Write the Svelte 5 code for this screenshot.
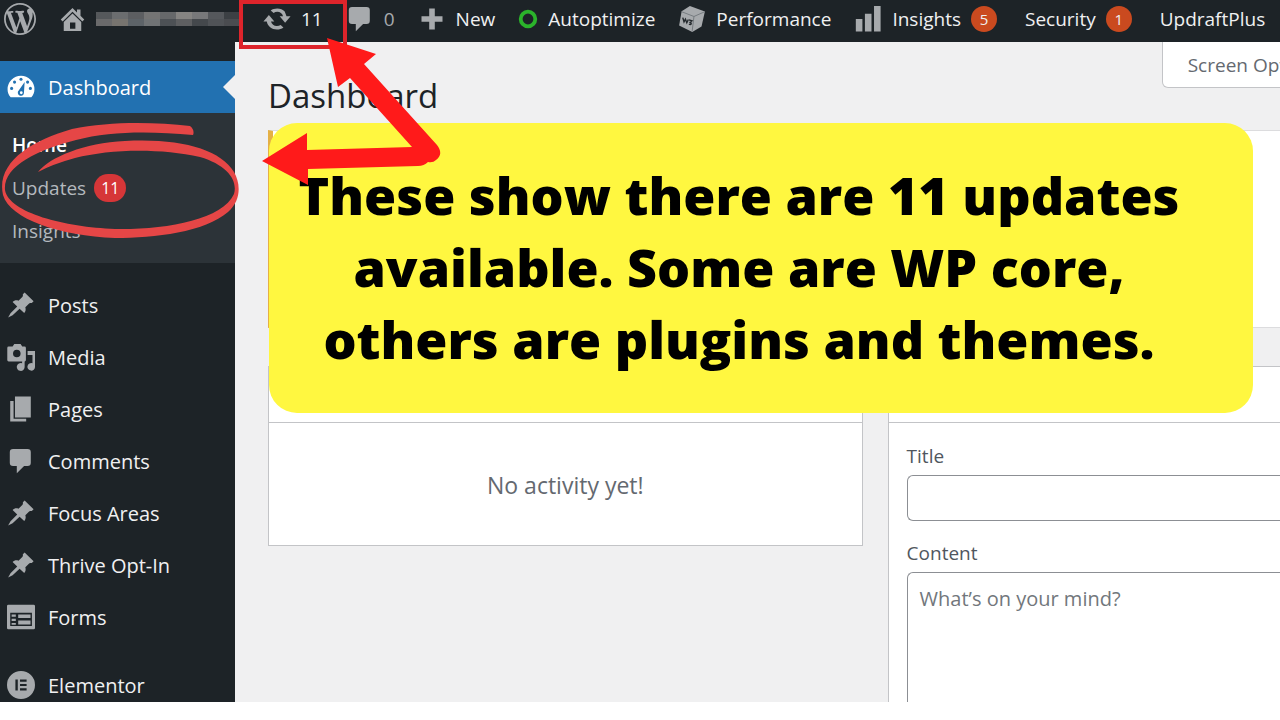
<script>
  const barItems = [
    { icon: 'update', label: '11' },
    { icon: 'comment', label: '0', muted: true },
    { icon: 'plus', label: 'New' },
    { icon: 'ring', label: 'Autoptimize' },
    { icon: 'cube', label: 'Performance' },
    { icon: 'bars', label: 'Insights', badge: 5 },
    { label: 'Security', badge: 1 },
    { label: 'UpdraftPlus' },
  ];

  const subItems = [
    { label: 'Home', current: true },
    { label: 'Updates', count: 11 },
    { label: 'Insights' },
  ];

  const menuItems = [
    { icon: 'pin', label: 'Posts' },
    { icon: 'media', label: 'Media' },
    { icon: 'pages', label: 'Pages' },
    { icon: 'comment', label: 'Comments' },
    { icon: 'pin', label: 'Focus Areas' },
    { icon: 'pin', label: 'Thrive Opt-In' },
    { icon: 'forms', label: 'Forms' },
    { icon: 'elementor', label: 'Elementor', separated: true },
  ];

  // colours of the pixelated site name, one per block
  const mosaic = [
    '#55585b', '#6b6d6f', '#5c5e61', '#747474', '#66686a', '#858482', '#77787a', '#55585c', '#3c4044',
    '#6a6a6b', '#77746f', '#5d6368', '#707375', '#4d5155', '#5e5f61', '#44484c', '#505357', '#4a4c50',
  ];

  let title = $state('');
  let content = $state('');
</script>

{#snippet icon(name)}
  <svg class="icon {name}" viewBox="0 0 20 20" aria-hidden="true">
    {#if name === 'update'}
      <path d="M10.2 2.500c2.100 0 4 .8 5.300 2.200l1.300 3.300h2.900l-3.900 4.700-3.900-4.700h2.400c-.5-1.900-2.100-3.100-4.100-3.100-1 0-1.900.3-2.600.8L5.500 3.900c1.300-.9 2.900-1.400 4.700-1.400zM4.200 7.100l3.900 4.700H5.700c.5 1.900 2.100 3.200 4.200 3.200 1 0 1.900-.3 2.700-.8l2 1.800c-1.300 1-2.900 1.500-4.700 1.500-3.700 0-6.600-2.400-7.200-5.700H.3z" />
    {:else if name === 'comment'}
      <path d="M4.300 1.500h10.400q2.300 0 2.300 2.300v7.400q0 2.300-2.300 2.300h-2.500L7 18.700v-5.200H4.300Q2 13.500 2 11.200V3.800q0-2.300 2.300-2.300z" />
    {:else if name === 'plus'}
      <path d="M8 2.500h4V8h5.500v4H12v5.500H8V12H2.500V8H8z" />
    {:else if name === 'ring'}
      <circle cx="10" cy="10" r="7.300" fill="none" stroke="#2bb32b" stroke-width="3.800" />
    {:else if name === 'cube'}
      <path d="m8.500.7 10.700 4-2.400 10.700-6.600 3.900L.8 14.600 2.600 4.500z" />
      <path d="m2.600 4.800 8.800 3.400 7.500-3.300M11.400 8.200l-1.300 10.700" fill="none" stroke="#6c7277" stroke-width=".6" />
      <path d="m3.400 9 .9 3 1-1.900 1 2.600 1.100-2.300M7.900 10.600l2 .7-1.200 1.100c1.200.5.9 2-.9 1.300" fill="none" stroke="#24292d" stroke-width="1" />
    {:else if name === 'bars'}
      <path d="M1.300 10H6v9H1.300zM7.800 6.300h4.700V19H7.800zM14.300.8H19V19h-4.700z" />
    {:else if name === 'pin'}
      <path d="m12.600 1 6.400 6.300-1.300 1.300c-.7-.1-1.300 0-1.900.3l-2.700 2.700c.5 1.600.2 3-.8 4.200L9 12.600l-5 4.700L.800 19l1.700-3.100L7.300 11 4 7.800c1.200-1.100 2.700-1.400 4.200-.8l2.900-2.900c.3-.6.4-1.200.2-1.800z" />
    {:else if name === 'media'}
      <path fill-rule="evenodd" d="M2 2.500h2L5.200.8h4.500l1.200 1.700h1.600q1 0 1 1v8.700q0 1-1 1H1.200q-1 0-1-1V3.500q0-1 1-1zM7 4.800a2.700 2.700 0 1 0 0 5.400 2.700 2.700 0 0 0 0-5.400z" />
      <path d="M14.700 5.700H20V17a2.700 2.700 0 1 1-1.800-2.500V8.500h-3.500zM12.600 10.500v6.600a2.800 2.800 0 1 1-1.800-2.600v-1.300z" />
    {:else if name === 'pages'}
      <path d="M5.700 1H17v15H5.700zM2.300 4.300h2.400V17h9v2H2.300z" />
    {:else if name === 'forms'}
      <path fill-rule="evenodd" d="M1 1.200h18q1 0 1 1v15.600q0 1-1 1H1q-1 0-1-1V2.200q0-1 1-1zM2.300 7v9.500h15.500V7zM3.300 8.300h3v1.500h-3zm0 3h3v1.500h-3zm0 3h3v1.300h-3zM8 8.300h8.800v2.500H8zm0 4.200h8.800v2.800H8z" />
    {:else if name === 'elementor'}
      <path fill-rule="evenodd" d="M10 0a10 10 0 1 0 0 20 10 10 0 0 0 0-20zM6 6h1.700v8H6zm3.300 0H14v1.600H9.300zm0 3.200H14v1.600H9.300zm0 3.200H14V14H9.300z" />
    {:else if name === 'gauge'}
      <path fill="#fff" d="M2.600 17.300C1.100 15.700.4 13.800.4 11.600a9.600 9.600 0 0 1 19.200 0c0 2.200-.7 4.100-2.200 5.700z" />
      <g fill="#2271b1">
        <circle cx="10" cy="4.500" r="1.100" />
        <circle cx="5.400" cy="6.500" r="1.100" />
        <circle cx="14.700" cy="6.500" r="1.100" />
        <circle cx="3.300" cy="11" r="1.100" />
        <circle cx="16.700" cy="11" r="1.100" />
        <path d="m12.600 6.500-.5 7.700a2.200 2.200 0 1 1-3.600-1.800z" />
      </g>
      <circle cx="10.200" cy="14.100" r="1" fill="#fff" />
    {:else if name === 'home'}
      <path d="m10 .8 3.600 3.500V2h2.800v5l3 3-1.500 1.500L10 3.700l-7.900 7.800L.6 10z" />
      <path fill-rule="evenodd" d="m10 5.100 7 6.900v7.200H3V12zM8 12.300v5h4.300v-5z" />
    {:else if name === 'wordpress'}
      <path fill-rule="evenodd" d="M20 10c0-5.510-4.490-10-10-10C4.480 0 0 4.490 0 10c0 5.520 4.480 10 10 10 5.510 0 10-4.480 10-10zM7.780 15.370L4.370 6.220c.55-.02 1.170-.08 1.170-.08.5-.06.440-1.130-.06-1.110 0 0-1.450.11-2.370.11-.18 0-.37 0-.58-.01C4.120 2.690 6.870 1.110 10 1.110c2.330 0 4.450.87 6.050 2.340-.68-.11-1.650.39-1.650 1.580 0 .74.450 1.360.9 2.100.35.61.55 1.360.55 2.460 0 1.490-1.400 5-1.400 5l-3.030-8.370c.54-.02.82-.17.82-.17.5-.05.440-1.250-.06-1.220 0 0-1.440.12-2.380.12-.87 0-2.330-.12-2.330-.12-.5-.03-.56 1.200-.06 1.220l.92.08 1.260 3.410zM17.410 10c.24-.64.740-1.870.43-4.250.7 1.290 1.050 2.710 1.050 4.250 0 3.290-1.730 6.240-4.400 7.780.97-2.590 1.940-5.200 2.920-7.780zM6.100 18.090C3.120 16.650 1.110 13.530 1.110 10c0-1.300.23-2.480.72-3.590C3.250 10.300 4.670 14.200 6.100 18.090zm4.030-6.630l2.580 6.980c-.86.29-1.760.45-2.710.45-.79 0-1.570-.11-2.290-.33.810-2.380 1.620-4.740 2.420-7.100z" />
    {/if}
  </svg>
{/snippet}

<div class="screen">
  <header class="admin-bar">
    <a class="logo" href="#about" aria-label="About WordPress">{@render icon('wordpress')}</a>
    <a class="site" href="#site" aria-label="Visit site">
      {@render icon('home')}
      <span class="mosaic">
        {#each mosaic as color}
          <span style="background: {color}"></span>
        {/each}
      </span>
    </a>
    {#each barItems as item}
      <a class="bar-item" class:muted={item.muted} class:plain={!item.icon} href="#bar">
        {#if item.icon}{@render icon(item.icon)}{/if}
        <span>{item.label}</span>
        {#if item.badge}<span class="bar-badge">{item.badge}</span>{/if}
      </a>
    {/each}
  </header>

  <div class="body">
    <nav class="sidebar">
      <a class="menu-item active" href="#dashboard">
        {@render icon('gauge')}
        <span>Dashboard</span>
      </a>
      <div class="submenu">
        {#each subItems as item}
          <a class:current={item.current} href="#sub">
            {item.label}
            {#if item.count}<span class="count">{item.count}</span>{/if}
          </a>
        {/each}
      </div>
      {#each menuItems as item}
        <a class="menu-item" class:separated={item.separated} href="#menu">
          {@render icon(item.icon)}
          <span>{item.label}</span>
        </a>
      {/each}
    </nav>

    <main>
      <button class="screen-options">Screen Options</button>
      <h1>Dashboard</h1>
      <section class="notice"></section>
      <div class="widgets">
        <section class="card">
          <div class="card-head"></div>
          <p class="empty">No activity yet!</p>
        </section>
        <section class="card draft">
          <div class="card-head"></div>
          <form>
            <label for="title">Title</label>
            <input id="title" type="text" bind:value={title} />
            <label for="content">Content</label>
            <textarea id="content" placeholder="What’s on your mind?" bind:value={content}></textarea>
          </form>
        </section>
      </div>
    </main>
  </div>

  <div class="callout">
    These show there are 11 updates<br />available. Some are WP core,<br />others are plugins and themes.
  </div>

  <svg class="marks" width="480" height="260" viewBox="0 0 480 260" aria-hidden="true">
    <path d="M241 2h104v45H241z" fill="none" stroke="#de242b" stroke-width="4" />
    <path fill="#ff1a1a" d="M327 38l49 16-12 10 73 81q7 9-1 15-3 3-8 2-4 4-10 4l-110 3v16l-46-24 45-28v17l105-3-62-69-12 9z" />
    <path
      fill="#e54646"
      d="M38 172C50 157 84 143 125 141C180 138 220 149 234 172C241 184 241 201 228 212C205 232 155 238 115 238C60 236 10 219 3 195C-4 163 30 141 72 129C110 121 155 122 190 126C194 129 194 133 193 135C150 131 110 131 76 140C36 150 3 167 5 190C9 213 65 227 115 229C165 230 222 220 234 194C238 180 227 165 200 157C160 148 110 149 75 158Q53 164 38 172z"
    />
  </svg>
</div>

<style>
  :global(body) {
    background: #fff;
  }
  .screen {
    position: relative;
    display: flex;
    flex-direction: column;
    height: calc(100vh - 18px);
    overflow: hidden;
    background: #f0f0f1;
    font-family: 'Open Sans', 'Noto Sans', sans-serif;
    font-size: 20px;
  }
  a {
    color: #f0f0f1;
    text-decoration: none;
  }
  .icon {
    flex: none;
    width: 28px;
    height: 28px;
    fill: #a7aaad;
  }

  .admin-bar {
    display: flex;
    align-items: center;
    flex: none;
    height: 42px;
    padding-left: 4px;
    padding-bottom: 4px;
    box-sizing: border-box;
    background: #1d2327;
    white-space: nowrap;
    font-size: 19px;
  }
  .admin-bar a {
    display: flex;
    align-items: center;
    flex: none;
  }
  .logo .icon {
    width: 32px;
    height: 32px;
  }
  .site {
    gap: 11px;
    margin-left: 24px;
  }
  .site .icon {
    width: 25px;
    height: 25px;
  }
  .mosaic {
    display: grid;
    grid-template-columns: repeat(9, 16px);
    grid-auto-rows: 7px;
  }
  .bar-item {
    gap: 10px;
    margin-left: 23px;
  }
  .bar-item.plain {
    margin-left: 28px;
  }
  .muted {
    color: #a7aaad;
  }
  .icon.ring {
    width: 20px;
    height: 20px;
  }
  .bar-badge {
    min-width: 26px;
    border-radius: 14px;
    background: #ca4a1f;
    font-size: 15px;
    line-height: 26px;
    text-align: center;
  }

  .body {
    display: flex;
    flex: 1;
    min-height: 0;
  }
  .sidebar {
    flex: none;
    width: 235px;
    padding-top: 19px;
    box-sizing: border-box;
    background: #1d2327;
  }
  .menu-item {
    display: flex;
    align-items: center;
    gap: 13px;
    height: 52px;
    padding-left: 7px;
  }
  .menu-item.active {
    position: relative;
    background: #2271b1;
    color: #fff;
  }
  .menu-item.active::after {
    content: '';
    position: absolute;
    right: 0;
    border: 12px solid transparent;
    border-right-color: #f0f0f1;
    border-left: 0;
  }
  .submenu {
    margin-bottom: 16px;
    padding: 10px 0 11px 12px;
    background: #2c3338;
    font-size: 19px;
  }
  .submenu a {
    display: flex;
    align-items: center;
    gap: 8px;
    height: 43px;
    color: #b4b9be;
  }
  .submenu .current {
    color: #fff;
    font-weight: 600;
  }
  .count {
    padding: 0 7px;
    border-radius: 14px;
    background: #d63638;
    color: #fff;
    font-size: 16px;
    line-height: 28px;
  }
  .separated {
    margin-top: 16px;
  }

  main {
    position: relative;
    flex: 1;
    min-width: 0;
    padding-left: 33px;
    overflow: hidden;
  }
  .screen-options {
    position: absolute;
    top: 0;
    right: -69px;
    height: 46px;
    padding: 0 25px;
    border: 1px solid #c3c4c7;
    border-top: 0;
    border-radius: 0 0 6px 6px;
    background: #fff;
    color: #646970;
    font-family: inherit;
    font-size: 19px;
  }
  h1 {
    margin: 0;
    padding: 30px 0 10px;
    color: #1d2327;
    font-size: 33px;
    font-weight: 400;
    line-height: 48px;
  }
  .notice {
    height: 196px;
    border: 1px solid #dcdcde;
    border-left: 5px solid #e5b045;
    border-right: 0;
    background: #fff;
  }
  .widgets {
    display: grid;
    grid-template-columns: 3fr 2fr;
    align-items: start;
    gap: 25px;
    margin-top: 38px;
    margin-right: -4px;
  }
  .card {
    border: 1px solid #c3c4c7;
    background: #fff;
  }
  .draft {
    border-right: 0;
  }
  .card-head {
    height: 55px;
    border-bottom: 1px solid #c3c4c7;
  }
  .empty {
    margin: 0;
    padding: 46px 0 44px;
    color: #646970;
    font-size: 23px;
    line-height: 32px;
    text-align: center;
  }
  form {
    display: flex;
    flex-direction: column;
    padding: 18px 0 0 18px;
    color: #50575e;
  }
  label {
    margin-bottom: 4px;
    font-size: 19px;
    line-height: 30px;
  }
  input,
  textarea {
    border: 1px solid #8c8f94;
    border-right: 0;
    border-radius: 6px 0 0 6px;
    background: #fff;
    box-sizing: border-box;
    font-family: inherit;
    font-size: 20px;
  }
  input {
    height: 46px;
    margin-bottom: 17px;
    padding: 0 12px;
  }
  textarea {
    height: 200px;
    padding: 12px;
    resize: none;
  }
  textarea::placeholder {
    color: #72777c;
  }

  .callout {
    position: absolute;
    top: 123px;
    left: 269px;
    right: 27px;
    padding: 36px 44px 38px 0;
    border-radius: 28px;
    background: #fff740;
    color: #000;
    font-size: 52px;
    font-weight: 800;
    line-height: 72px;
    text-align: center;
    white-space: nowrap;
  }
  .marks {
    position: absolute;
    top: 0;
    left: 0;
    pointer-events: none;
  }
</style>
